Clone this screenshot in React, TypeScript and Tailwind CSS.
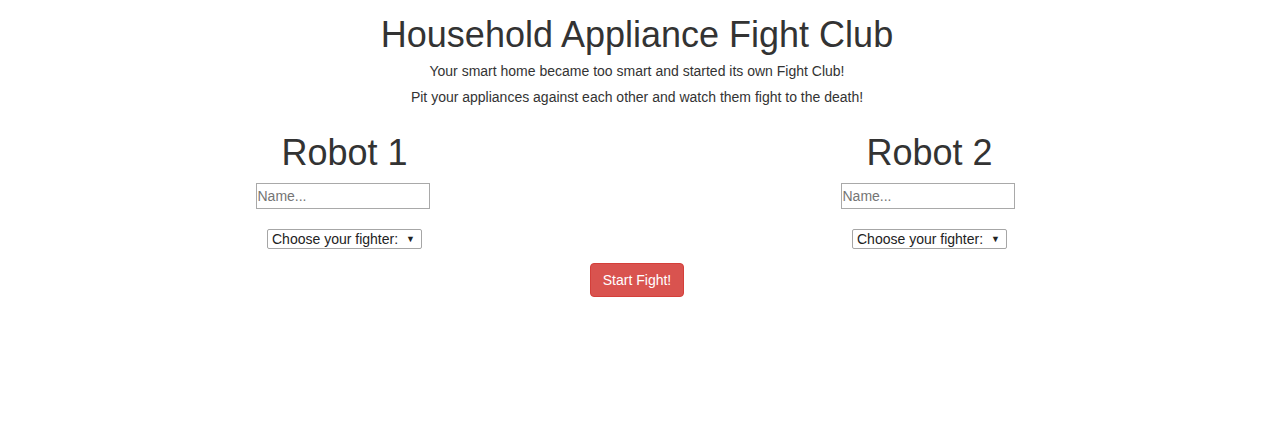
import React from "react";

function RobotCol({ label }: { label: string }) {
  return (
    <div className="w-[585px] flex flex-col items-center">
      <h2 className="text-[36px] leading-[1.1] font-normal text-[#333] m-0">{label}</h2>
      <input
        type="text"
        placeholder="Name..."
        className="mt-[11px] mr-[4px] w-[174px] h-[26px] border border-[#a9a9a9] px-[1px] text-[14px] text-[#333] placeholder:text-[#757575] outline-none bg-white"
      />
      <div className="relative mt-[20px] w-[155px] h-[20px] border border-[#a6a6a6] rounded-[2px] bg-white flex items-center">
        <select className="appearance-none w-full h-full bg-transparent pl-[4px] pr-[16px] text-[14px] text-[#222] leading-[18px] outline-none">
          <option>Choose your fighter:</option>
        </select>
        <span className="pointer-events-none absolute right-[6px] top-[2px] text-[9px] leading-[14px] text-[#222]">▼</span>
      </div>
    </div>
  );
}

export default function App() {
  return (
    <div className="w-full min-h-[444px] bg-white text-[#333] font-['Liberation_Sans',Arial,sans-serif]">
      <div className="w-[1170px] ml-[52px] px-[15px] text-center">
        <h1 className="pt-[15px] text-[36px] leading-[1.1] font-normal m-0">Household Appliance Fight Club</h1>
        <p className="mt-[6px] text-[14px] leading-[20px]">Your smart home became too smart and started its own Fight Club!</p>
        <p className="mt-[6px] text-[14px] leading-[20px]">Pit your appliances against each other and watch them fight to the death!</p>
        <div className="-mx-[15px] mt-[26px] flex">
          <RobotCol label="Robot 1" />
          <RobotCol label="Robot 2" />
        </div>
        <div className="mt-[14px] flex justify-center">
          <button className="w-[94px] h-[34px] rounded-[4px] bg-[#d9534f] border border-[#d43f3a] text-white text-[14px] leading-[20px]">
            Start Fight!
          </button>
        </div>
      </div>
    </div>
  );
}
